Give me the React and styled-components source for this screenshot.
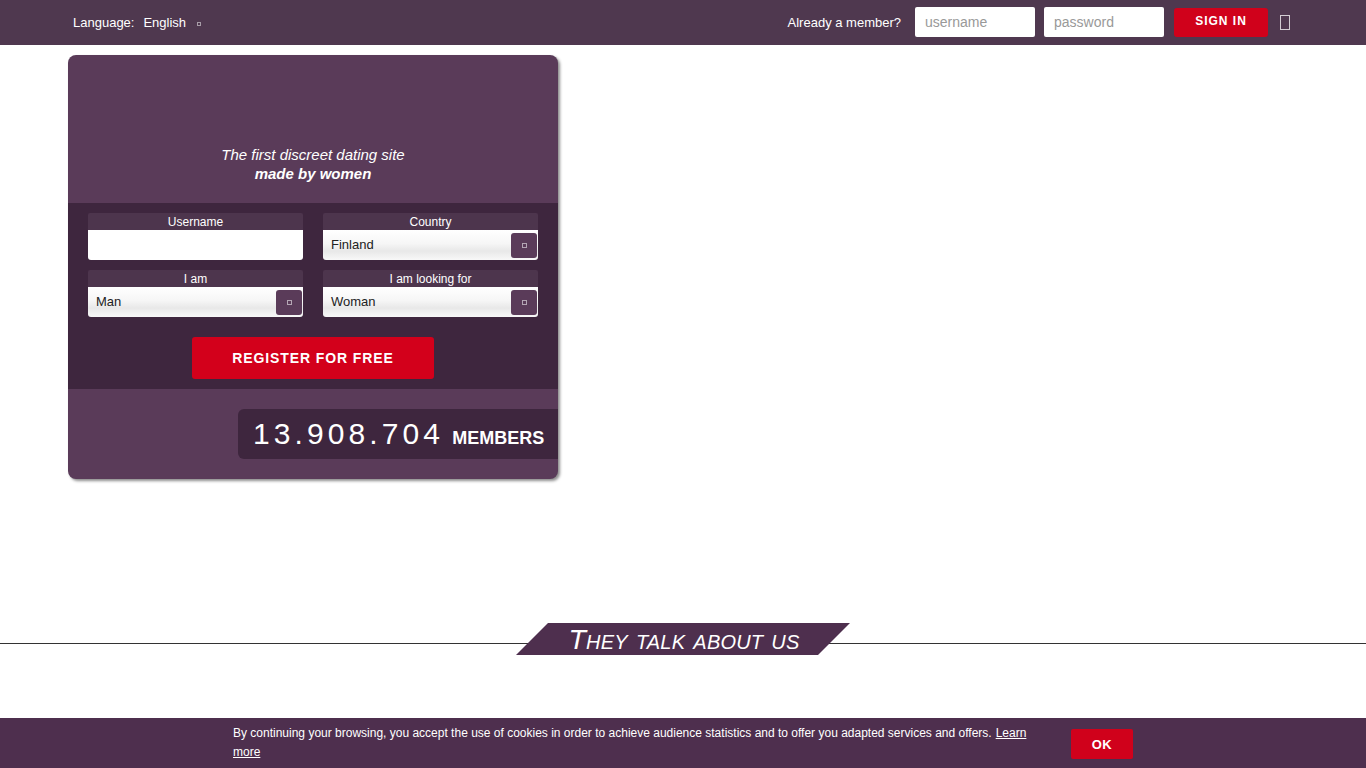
import React from "react";
import styled, { createGlobalStyle } from "styled-components";

const Global = createGlobalStyle`
  html, body { margin: 0; padding: 0; background: #fff; }
  body { font-family: "Liberation Sans", Arial, sans-serif; color: #222; }
  * { box-sizing: border-box; }
`;

const Header = styled.header`
  height: 45px;
  background: #4f384f;
`;

const HeaderInner = styled.div`
  width: 1230px;
  margin: 0 auto;
  height: 100%;
  display: flex;
  align-items: center;
  justify-content: space-between;
  padding: 0 8px 0 5px;
`;

const Lang = styled.div`
  display: flex;
  align-items: center;
  color: #fff;
  font-size: 13px;
  gap: 9px;
`;

const Tofu = styled.span`
  display: inline-block;
  width: ${(p) => p.$w || 5}px;
  height: ${(p) => p.$h || 5}px;
  border: 1px solid ${(p) => p.$c || "rgba(255,255,255,0.6)"};
  margin-left: ${(p) => p.$ml || 0}px;
  margin-top: ${(p) => p.$mt || 0}px;
`;

const Login = styled.div`
  display: flex;
  align-items: center;
  color: #fff;
  font-size: 13px;
  margin-top: -1px;
`;

const LoginLabel = styled.span`
  margin-right: 14px;
  margin-left: 2px;
`;

const TopInput = styled.input`
  width: 120px;
  height: 30px;
  border: none;
  border-radius: 2px;
  padding: 0 10px;
  font-family: "Liberation Sans", Arial, sans-serif;
  font-size: 14px;
  color: #333;
  margin-right: 9px;
  outline: none;
  &::placeholder { color: #999; }
`;

const SignIn = styled.button`
  width: 94px;
  height: 29px;
  border: none;
  border-radius: 3px;
  background: #d0011b;
  color: #fff;
  font-family: "Liberation Sans", Arial, sans-serif;
  font-weight: bold;
  font-size: 12px;
  letter-spacing: 1px;
  margin-left: 1px;
  margin-right: 12px;
  padding: 0 0 2px;
`;

const Main = styled.main`
  width: 1230px;
  margin: 0 auto;
  padding-top: 10px;
`;

const Card = styled.section`
  width: 490px;
  border-radius: 8px;
  overflow: hidden;
  background: #5a3b59;
  box-shadow: 2px 2px 3px rgba(0, 0, 0, 0.45);
`;

const Hero = styled.div`
  height: 148px;
  display: flex;
  flex-direction: column;
  justify-content: flex-end;
  align-items: center;
  padding-bottom: 20px;
  color: #fff;
  font-size: 15px;
  font-style: italic;
  line-height: 19px;
`;

const Bold = styled.strong`
  font-weight: bold;
`;

const Form = styled.div`
  background: #3e263e;
  padding: 10px 20px 10px;
  display: flex;
  flex-direction: column;
  align-items: center;
`;

const Grid = styled.div`
  width: 100%;
  display: grid;
  grid-template-columns: 215px 215px;
  column-gap: 20px;
  row-gap: 10px;
`;

const Field = styled.div`
  display: flex;
  flex-direction: column;
`;

const FieldLabel = styled.div`
  height: 17px;
  background: #4d354d;
  color: #fff;
  font-size: 12px;
  line-height: 18px;
  text-align: center;
  border-radius: 2px 2px 0 0;
`;

const TextBox = styled.div`
  height: 30px;
  background: #fff;
  border-radius: 0 0 3px 3px;
`;

const SelectBox = styled.div`
  height: 30px;
  border-radius: 0 0 3px 3px;
  background: linear-gradient(#ffffff 0%, #f6f6f6 45%, #e8e8e8 70%, #f8f8f8 100%);
  display: flex;
  align-items: center;
  justify-content: space-between;
  padding: 0 1px 0 8px;
  font-size: 13px;
  color: #222;
`;

const SelectValue = styled.span`
  margin-top: -2px;
`;

const SelectBtn = styled.span`
  width: 26px;
  height: 25px;
  background: #5a3b59;
  border-radius: 3px;
  display: flex;
  align-items: center;
  justify-content: center;
  margin-top: 1px;
`;

const Register = styled.button`
  margin-top: 20px;
  width: 242px;
  height: 42px;
  border: none;
  border-radius: 3px;
  background: #d3001b;
  color: #fff;
  font-family: "Liberation Sans", Arial, sans-serif;
  font-weight: bold;
  font-size: 14px;
  letter-spacing: 0.9px;
  padding-bottom: 1px;
`;

const Bottom = styled.div`
  padding: 20px 0;
  display: flex;
  justify-content: flex-end;
`;

const Counter = styled.div`
  height: 50px;
  width: 320px;
  background: #3e263e;
  border-radius: 6px 0 0 6px;
  display: flex;
  align-items: center;
  padding-left: 15px;
  color: #fff;
  gap: 8px;
`;

const Number = styled.span`
  font-size: 30px;
  letter-spacing: 4.1px;
  font-weight: normal;
`;

const MembersLabel = styled.span`
  font-size: 18px;
  font-weight: bold;
  padding-top: 8px;
`;

const Press = styled.div`
  position: relative;
  margin-top: 144px;
  height: 32px;
  display: flex;
  justify-content: center;
`;

const Rule = styled.div`
  position: absolute;
  left: 0;
  right: 0;
  top: 20px;
  height: 1px;
  background: #333;
`;

const Ribbon = styled.h2`
  position: relative;
  margin: 0;
  width: 334px;
  height: 32px;
  background: #4e2f4e;
  clip-path: polygon(32px 0, 100% 0, calc(100% - 32px) 100%, 0 100%);
  color: #fff;
  font-size: 28.5px;
  font-weight: normal;
  font-style: italic;
  font-variant: small-caps;
  text-transform: lowercase;
  line-height: 32px;
  text-align: center;
  letter-spacing: 0.2px;
  padding-left: 2px;
  &::first-letter { text-transform: uppercase; }
`;

const CookieBar = styled.div`
  position: fixed;
  left: 0;
  right: 0;
  bottom: 0;
  height: 50px;
  background: #4e2f4e;
  display: flex;
  justify-content: center;
  align-items: center;
`;

const CookieInner = styled.div`
  width: 900px;
  display: flex;
  align-items: center;
  justify-content: space-between;
`;

const CookieText = styled.p`
  margin: 0;
  width: 805px;
  color: #fff;
  font-size: 12px;
  line-height: 19px;
`;

const CookieLink = styled.a`
  color: #fff;
  text-decoration: underline;
  margin-left: 4px;
`;

const OkBtn = styled.button`
  width: 62px;
  height: 30px;
  border: none;
  border-radius: 2px;
  background: #d0011b;
  color: #fff;
  font-family: "Liberation Sans", Arial, sans-serif;
  font-weight: bold;
  font-size: 13px;
  letter-spacing: 0.5px;
  margin-top: 2px;
`;

function Select({ value }) {
  return (
    <SelectBox>
      <SelectValue>{value}</SelectValue>
      <SelectBtn>
        <Tofu $w={5} $h={5} $c="rgba(255,255,255,0.55)" />
      </SelectBtn>
    </SelectBox>
  );
}

export default function App() {
  return (
    <>
      <Global />
      <Header>
        <HeaderInner>
          <Lang>
            <span>Language:</span>
            <span>English</span>
            <Tofu $w={4} $h={4} $c="rgba(255,255,255,0.5)" $ml={2} $mt={3} />
          </Lang>
          <Login>
            <LoginLabel>Already a member?</LoginLabel>
            <TopInput placeholder="username" />
            <TopInput placeholder="password" type="password" />
            <SignIn>SIGN IN</SignIn>
            <Tofu $w={10} $h={15} $c="rgba(255,255,255,0.75)" />
          </Login>
        </HeaderInner>
      </Header>
      <Main>
        <Card>
          <Hero>
            <span>The first discreet dating site</span>
            <Bold>made by women</Bold>
          </Hero>
          <Form>
            <Grid>
              <Field>
                <FieldLabel>Username</FieldLabel>
                <TextBox />
              </Field>
              <Field>
                <FieldLabel>Country</FieldLabel>
                <Select value="Finland" />
              </Field>
              <Field>
                <FieldLabel>I am</FieldLabel>
                <Select value="Man" />
              </Field>
              <Field>
                <FieldLabel>I am looking for</FieldLabel>
                <Select value="Woman" />
              </Field>
            </Grid>
            <Register>REGISTER FOR FREE</Register>
          </Form>
          <Bottom>
            <Counter>
              <Number>13.908.704</Number>
              <MembersLabel>MEMBERS</MembersLabel>
            </Counter>
          </Bottom>
        </Card>
      </Main>
      <Press>
        <Rule />
        <Ribbon>They talk about us</Ribbon>
      </Press>
      <CookieBar>
        <CookieInner>
          <CookieText>
            By continuing your browsing, you accept the use of cookies in order to achieve audience statistics and to offer you adapted services and offers.
            <CookieLink href="#">Learn more</CookieLink>
          </CookieText>
          <OkBtn>OK</OkBtn>
        </CookieInner>
      </CookieBar>
    </>
  );
}
